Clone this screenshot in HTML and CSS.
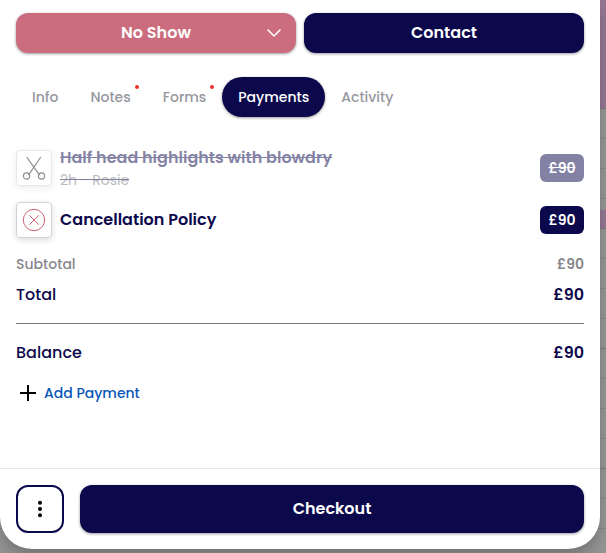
FILE: index.html
```html
<!DOCTYPE html>
<html lang="en">
<head>
<meta charset="utf-8">
<meta name="viewport" content="width=device-width, initial-scale=1">
<title>Appointment payments</title>
<link rel="stylesheet" href="styles.css">
</head>
<body>
<div class="calendar" aria-hidden="true">
  <div class="event event-morning"></div>
  <div class="event event-short"></div>
</div>
<main class="sheet">
  <div class="content">
    <div class="actions">
      <div class="status">
        <select class="button status-select" aria-label="Appointment status">
          <option>No Show</option>
        </select>
        <svg class="chevron" viewBox="0 0 16 16" aria-hidden="true"><path d="M2 5l6 6 6-6"/></svg>
      </div>
      <button class="button" type="button">Contact</button>
    </div>

    <nav class="tabs" role="tablist" aria-label="Appointment sections">
      <button class="tab" role="tab" type="button">Info</button>
      <button class="tab tab-alert" role="tab" type="button">Notes</button>
      <button class="tab tab-alert" role="tab" type="button">Forms</button>
      <button class="tab tab-active" role="tab" type="button" aria-selected="true">Payments</button>
      <button class="tab" role="tab" type="button">Activity</button>
    </nav>

    <ul class="items">
      <li class="item item-void">
        <span class="tile">
          <svg class="icon scissors" viewBox="0 0 24 24" aria-hidden="true"><path d="M5 1.500l12.200 17.200M18.500 1.500L6.800 18.700"/><circle cx="4.500" cy="20" r="3.100"/><circle cx="19.500" cy="20" r="3.100"/></svg>
        </span>
        <div class="details">
          <span class="name">Half head highlights with blowdry</span>
          <span class="meta">2h - Rosie</span>
        </div>
        <span class="price">£90</span>
      </li>
      <li class="item">
        <span class="tile">
          <svg class="icon cross" viewBox="0 0 24 24" aria-hidden="true"><circle cx="12" cy="12" r="10.700"/><path d="M7.500 7.500l9 9M16.500 7.500l-9 9"/></svg>
        </span>
        <div class="details"><span class="name">Cancellation Policy</span></div>
        <span class="price">£90</span>
      </li>
    </ul>

    <dl class="totals">
      <div class="row row-subtotal"><dt>Subtotal</dt><dd>£90</dd></div>
      <div class="row row-total"><dt>Total</dt><dd>£90</dd></div>
      <div class="row row-balance"><dt>Balance</dt><dd>£90</dd></div>
    </dl>

    <button class="add" type="button">
      <svg class="plus" viewBox="0 0 24 24" aria-hidden="true"><path d="M12 4v16M4 12h16"/></svg>
      Add Payment
    </button>
  </div>

  <footer class="footer">
    <button class="more" type="button" aria-label="More options">
      <svg class="dots" viewBox="0 0 24 24" aria-hidden="true"><circle cx="12" cy="5.700" r="2"/><circle cx="12" cy="12" r="2"/><circle cx="12" cy="18.300" r="2"/></svg>
    </button>
    <button class="button checkout" type="button">Checkout</button>
  </footer>
</main>
</body>
</html>
```
FILE: styles.css
```css
* {
  box-sizing: border-box;
}

:root {
  --navy: #0c084c;
  --rose: #cb6d7e;
  --grey: #86868c;
  --shadow: 0 1px 3px rgba(0, 0, 0, 0.4);
}

body {
  margin: 0;
  min-height: 100vh;
  display: flex;
  background: #8e8e8e;
  color: var(--navy);
  font: 500 16px/24px Poppins, Inter, sans-serif;
}

button,
select {
  font: inherit;
  margin: 0;
  border: 0;
  cursor: pointer;
}

.calendar {
  position: absolute;
  inset: 0;
  overflow: hidden;
  background:
    repeating-linear-gradient(transparent 0 108px, #777 108px 109px, transparent 109px 120px),
    repeating-linear-gradient(transparent 0 18px, #868686 18px 19px, transparent 19px 30px),
    #939393;
}

.event {
  position: absolute;
  left: 0;
  right: 0;
  background: #927592;
}

.event-morning {
  top: 0;
  height: 108px;
}

.event-short {
  top: 210px;
  height: 18px;
}

.sheet {
  position: relative;
  flex: 1;
  display: flex;
  flex-direction: column;
  margin: 0 6px 4px 0;
  background: #fff;
  border-radius: 0 0 32px 32px;
  box-shadow: 0 8px 16px -4px rgba(0, 0, 0, 0.3);
}

.content {
  flex: 1;
  padding: 13px 16px 16px;
}

.actions {
  display: grid;
  grid-template-columns: 1fr 1fr;
  gap: 8px;
}

.button {
  width: 100%;
  height: 40px;
  border-radius: 12px;
  background: var(--navy);
  color: #fff;
  font-weight: 600;
  box-shadow: var(--shadow);
}

.status {
  display: grid;
  align-items: center;
}

.status > * {
  grid-area: 1 / 1;
}

.status-select {
  appearance: none;
  padding: 0 32px;
  background: var(--rose);
  text-align: center;
  text-align-last: center;
}

.chevron {
  width: 16px;
  height: 16px;
  justify-self: end;
  margin-right: 14px;
  fill: none;
  stroke: #fff;
  stroke-width: 1.6;
  stroke-linecap: round;
  stroke-linejoin: round;
  pointer-events: none;
}

.tabs {
  display: flex;
  margin-top: 24px;
}

.tab {
  position: relative;
  height: 40px;
  padding: 0 16px;
  border-radius: 20px;
  background: none;
  color: #97979f;
  font-size: 14px;
}

.tab-active {
  background: var(--navy);
  color: #fff;
  box-shadow: var(--shadow);
}

.tab-alert::after {
  content: "";
  position: absolute;
  top: 8px;
  right: 8px;
  width: 4px;
  height: 4px;
  border-radius: 50%;
  background: #f5302f;
}

.items {
  display: grid;
  gap: 8px;
  margin: 29px 0 0;
  padding: 0;
  list-style: none;
}

.item {
  display: flex;
  align-items: center;
  gap: 8px;
  min-height: 44px;
}

.tile {
  display: grid;
  place-items: center;
  width: 36px;
  height: 36px;
  border: 1px solid #d2d2d4;
  border-radius: 4px;
  box-shadow: 0 2px 6px rgba(0, 0, 0, 0.14);
}

.icon {
  width: 24px;
  height: 24px;
  fill: none;
  stroke-linecap: round;
}

.scissors {
  stroke: #222;
  stroke-width: 1.2;
}

.cross {
  stroke: #ca6478;
  stroke-width: 1;
}

.details {
  flex: 1;
  display: flex;
  flex-direction: column;
}

.name {
  font-weight: 600;
}

.meta {
  color: #77777c;
  font-size: 14px;
  font-weight: 400;
  line-height: 20px;
}

.price {
  min-width: 44px;
  padding: 4px 8px;
  border-radius: 6px;
  background: var(--navy);
  color: #fff;
  font-size: 14px;
  font-weight: 600;
  line-height: 20px;
  text-align: center;
}

.item-void {
  opacity: 0.5;
}

.item-void .details,
.item-void .price {
  text-decoration: line-through;
}

.totals {
  margin: 12px 0 0;
}

.row {
  display: flex;
  justify-content: space-between;
}

.row dd {
  margin: 0;
  font-weight: 600;
}

.row-subtotal {
  color: var(--grey);
  font-size: 14px;
  line-height: 20px;
}

.row-total {
  padding: 9px 0 16px;
}

.row-balance {
  padding: 17px 0 0;
  border-top: 1px solid #77777f;
}

.add {
  display: flex;
  align-items: center;
  margin-top: 16px;
  padding: 0;
  gap: 4px;
  background: none;
  color: #0b57b8;
  font-size: 14px;
}

.plus {
  width: 24px;
  height: 24px;
  stroke: #000;
  stroke-width: 2;
}

.footer {
  display: flex;
  gap: 16px;
  padding: 16px;
  border-top: 1px solid #e6e6e6;
}

.more {
  display: grid;
  place-items: center;
  width: 48px;
  height: 48px;
  padding: 0;
  border: 2px solid var(--navy);
  border-radius: 12px;
  background: #fff;
}

.dots {
  width: 24px;
  height: 24px;
}

.checkout {
  flex: 1;
  height: 48px;
}
```
